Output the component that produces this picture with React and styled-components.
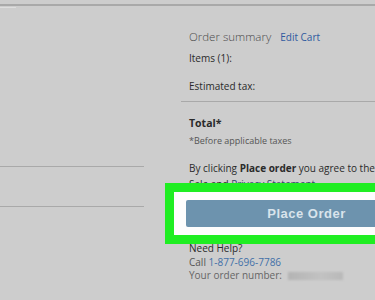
import styled, { createGlobalStyle } from "styled-components";

const GlobalStyle = createGlobalStyle`
  html, body {
    margin: 0;
    padding: 0;
    background: #cdcdcd;
    overflow: hidden;
  }
  body {
    font-family: "Open Sans", "Noto Sans", sans-serif;
    color: #2a2a2a;
  }
`;

const Page = styled.div`
  width: 375px;
  height: 300px;
  background: #cdcdcd;
  overflow: hidden;
`;

const TopRule = styled.div`
  margin-top: 4px;
  height: 2px;
  background: #a9a9a9;
`;

const TopHint = styled.div`
  margin-top: 1px;
  width: 16px;
  height: 1px;
  background: #dedede;
`;

const Columns = styled.div`
  display: flex;
  align-items: flex-start;
`;

const LeftPane = styled.div`
  width: 144px;
  padding-top: 158px;
  flex-shrink: 0;
`;

const LeftRule = styled.div`
  height: 1px;
  background: #a9a9a9;
  margin-bottom: ${(p) => p.gap || "0"};
`;

const RightPane = styled.div`
  margin-left: 37px;
  width: 255px;
  flex-shrink: 0;
  padding-top: 20px;
`;

const Inner = styled.div`
  padding-left: 8px;
`;

const SummaryHead = styled.div`
  display: flex;
  align-items: baseline;
  gap: 9px;
  height: 18px;
  line-height: 18px;
  margin-bottom: 5px;
`;

const Heading = styled.span`
  font-size: 11.5px;
  font-weight: 300;
  color: #4a4a4a;
`;

const Link = styled.span`
  font-size: 10px;
  color: #2f5aa0;
`;

const Line = styled.div`
  font-size: ${(p) => p.size || "10px"};
  font-weight: ${(p) => (p.bold ? 700 : 400)};
  color: ${(p) => p.color || "#2a2a2a"};
  height: ${(p) => p.h || "14px"};
  line-height: 14px;
  white-space: nowrap;
`;

const Divider = styled.div`
  height: 1px;
  background: #a9a9a9;
  margin: 8px 0 14px 0;
`;

const Strong = styled.b`
  font-weight: 700;
`;

const Blue = styled.span`
  color: ${(p) => p.color || "#2f5aa0"};
`;

const Highlight = styled.div`
  position: relative;
  margin: -8px 0 -3px -24px;
  border: 9px solid #1fee22;
  background: #fdfdfd;
  padding: 8px 0 8px 12px;
`;

const OrderButton = styled.div`
  height: 27px;
  border-radius: 2px;
  background: #6d93ae;
  display: flex;
  align-items: center;
  justify-content: center;
  font-family: "Liberation Sans", Arial, sans-serif;
  font-size: 13px;
  font-weight: 700;
  letter-spacing: 0.5px;
  color: #d9e4ec;
`;

const Blur = styled.span`
  display: inline-block;
  width: 55px;
  height: 8px;
  margin-left: 3px;
  vertical-align: middle;
  background: linear-gradient(90deg, #b4b4b4, #c2c2c2 60%, #b9b9b9);
  filter: blur(1px);
`;

export default function App() {
  return (
    <Page>
      <GlobalStyle />
      <TopRule />
      <TopHint />
      <Columns>
        <LeftPane>
          <LeftRule gap="39px" />
          <LeftRule />
        </LeftPane>
        <RightPane>
          <Inner>
            <SummaryHead>
              <Heading>Order summary</Heading>
              <Link>Edit Cart</Link>
            </SummaryHead>
            <Line h="28px">Items (1):</Line>
            <Line>Estimated tax:</Line>
          </Inner>
          <Divider />
          <Inner>
            <Line bold size="10.5px" h="18px">Total*</Line>
            <Line size="9px" color="#555" h="27px">*Before applicable taxes</Line>
            <Line h="16px">
              By clicking <Strong>Place order</Strong> you agree to the Terms of
            </Line>
            <Line>
              Sale and <Blue color="#34466a">Privacy Statement</Blue>
            </Line>
            <Highlight>
              <OrderButton>Place Order</OrderButton>
            </Highlight>
            <Line>Need Help?</Line>
            <Line color="#555" h="13px">
              Call <Blue color="#4270a8">1-877-696-7786</Blue>
            </Line>
            <Line color="#666" h="13px">
              Your order number: <Blur />
            </Line>
          </Inner>
        </RightPane>
      </Columns>
    </Page>
  );
}
